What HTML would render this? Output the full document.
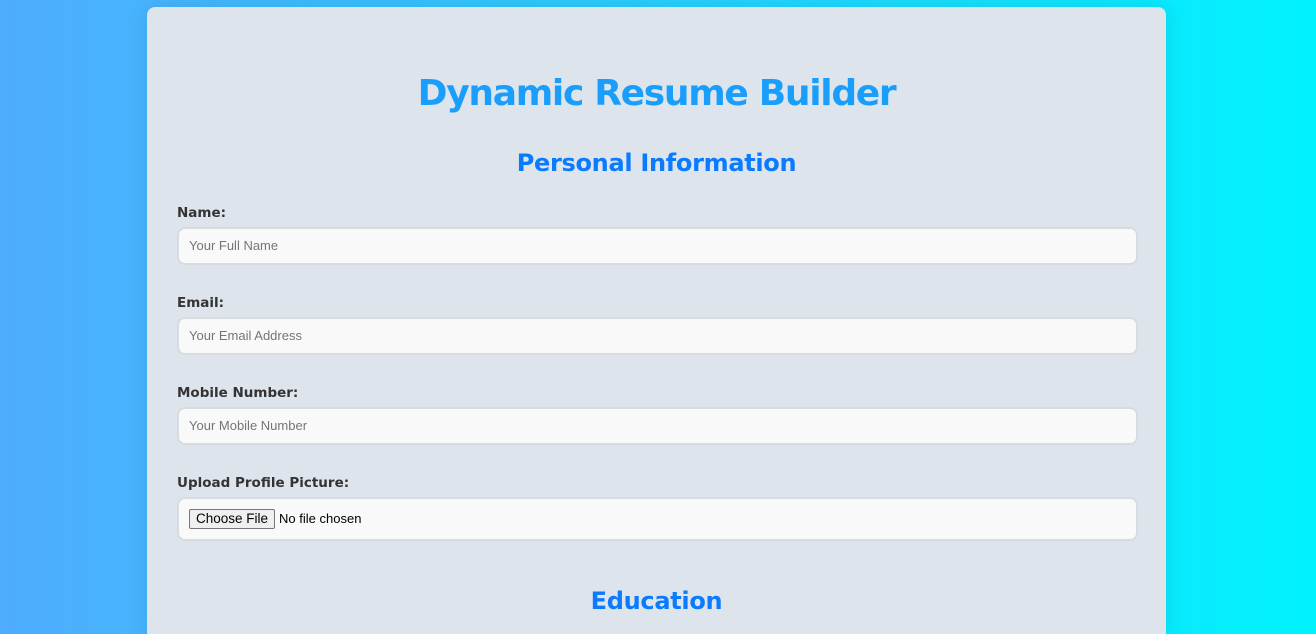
<!DOCTYPE html>
<html><head><style>
html,body{margin:0;height:634px;overflow:hidden}
body{background:linear-gradient(to right,#4facfe,#00f2fe);font-family:"DejaVu Sans","Liberation Sans",sans-serif;position:relative}
.card{position:absolute;left:147px;top:7px;width:1019px;height:627px;background:#dee4ec;border-radius:8px 8px 0 0;box-shadow:0 0 20px rgba(0,0,0,.1)}
.t{position:absolute;left:0;width:100%;text-align:center;font-weight:bold}
h1.t{top:66px;margin:0;font-size:36px;color:#1a9efc;letter-spacing:-1.3px}
h2.t{margin:0;font-size:24px;color:#0a7bff;letter-spacing:-0.3px}
.l{position:absolute;left:30px;font-weight:bold;font-size:13.5px;color:#333}
.i{position:absolute;left:30px;height:34px;background:#f9f9f9;border:2px solid #d8dbe0;border-radius:8px;font-family:"Liberation Sans",sans-serif;font-size:13px;color:#757575;line-height:34px;padding-left:10px;box-sizing:content-box;width:947px}
.btn{display:inline-block;border:1px solid #767676;background:#efefef;border-radius:2px;color:#000;padding:0 6px;line-height:18px;font-size:13.5px;margin-right:4px}
</style></head><body>
<div class="card">
<h1 class="t">Dynamic Resume Builder</h1>
<h2 class="t" style="top:142px">Personal Information</h2>
<div class="l" style="top:198px">Name:</div>
<div class="i" style="top:220px">Your Full Name</div>
<div class="l" style="top:288px">Email:</div>
<div class="i" style="top:310px">Your Email Address</div>
<div class="l" style="top:378px">Mobile Number:</div>
<div class="i" style="top:400px">Your Mobile Number</div>
<div class="l" style="top:468px">Upload Profile Picture:</div>
<div class="i" style="top:490px;height:40px;line-height:40px;color:#000"><span class="btn">Choose File</span>No file chosen</div>
<h2 class="t" style="top:580px">Education</h2>
</div>
</body></html>
